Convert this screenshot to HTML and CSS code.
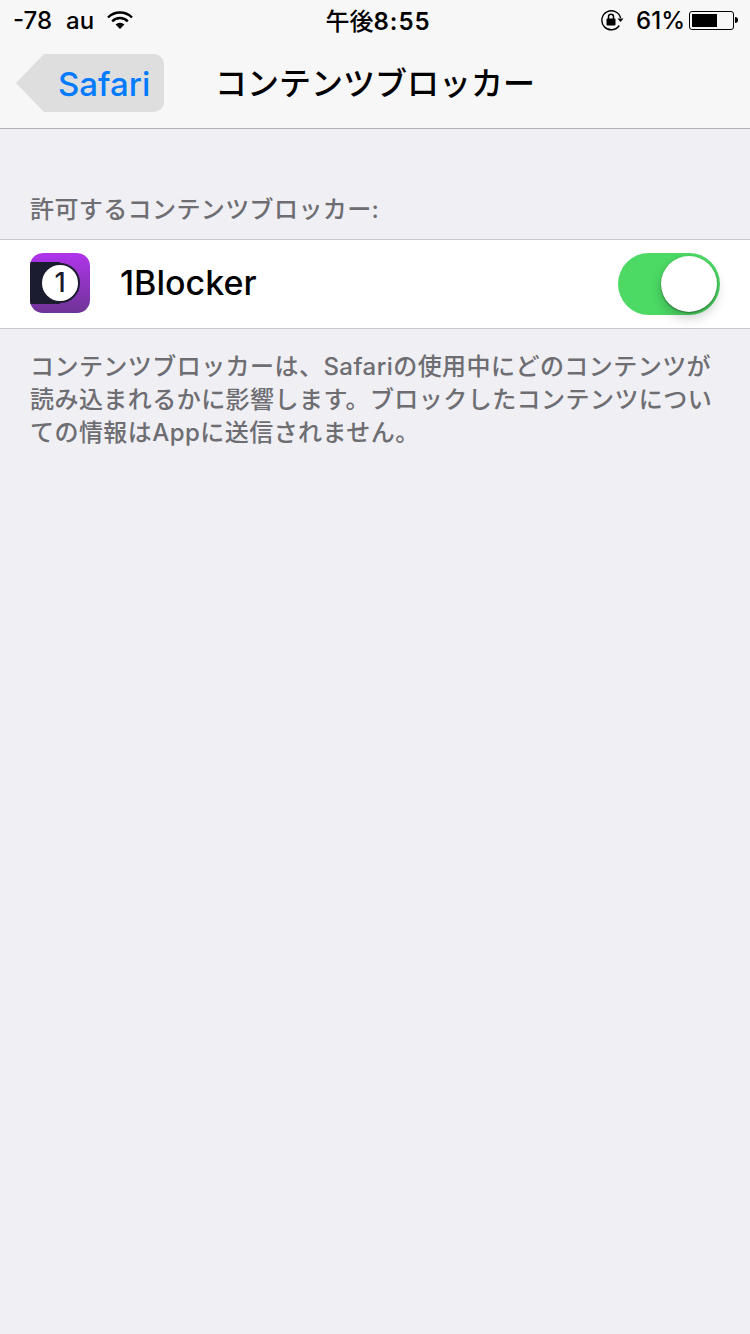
FILE: index.html
```html
<!DOCTYPE html>
<html lang="ja">
<head>
    <meta charset="UTF-8">
    <meta name="viewport" content="width=device-width, initial-scale=1.0">
    <title>コンテンツブロッカー</title>
    <link rel="stylesheet" href="styles.css">
</head>
<body>

<div class="header">
    <!-- Status bar -->
    <div class="status-bar">
        <div class="status-left">
            <span class="signal">-78</span>
            <span class="carrier">au</span>
            <svg class="wifi" width="26" height="20" viewBox="0 0 26 20">
                <path d="M1 7.5 A17 17 0 0 1 25 7.5" fill="none" stroke="#000" stroke-width="2.4"/>
                <path d="M5.2 11.3 A11 11 0 0 1 20.8 11.3" fill="none" stroke="#000" stroke-width="2.4"/>
                <path d="M13 19 L8.6 14.4 A6.4 6.4 0 0 1 17.4 14.4 Z" fill="#000"/>
            </svg>
        </div>
        <div class="status-time">午後<span class="time-digits">8:55</span></div>
        <div class="status-right">
            <svg class="rotation-lock" width="24" height="22" viewBox="0 0 24 22">
                <path d="M20.6 9 A9.5 9.5 0 1 0 19.3 16.5" fill="none" stroke="#000" stroke-width="1.4"/>
                <path d="M17.5 9.5 H23.5 L20.5 13 Z" fill="#000"/>
                <rect x="6.5" y="9.5" width="9" height="7" rx="1" fill="#000"/>
                <path d="M8.5 10 V7.8 A2.5 2.5 0 0 1 13.5 7.8 V10" fill="none" stroke="#000" stroke-width="1.5"/>
            </svg>
            <span class="battery-pct">61%</span>
            <div class="battery">
                <div class="battery-body"><div class="battery-fill" style="width: 65%"></div></div>
                <div class="battery-tip"></div>
            </div>
        </div>
    </div>

    <!-- Nav bar -->
    <div class="nav-bar">
        <a class="back" href="#">
            <svg class="back-shape" width="148" height="58" viewBox="0 0 148 58">
                <path d="M0 29 L28 0 H138 A10 10 0 0 1 148 10 V48 A10 10 0 0 1 138 58 H28 Z" fill="#dedede"/>
            </svg>
            <span class="back-label">Safari</span>
        </a>
        <h1 class="nav-title">コンテンツブロッカー</h1>
    </div>
</div>

<div class="section-title">許可するコンテンツブロッカー:</div>

<div class="row">
    <div class="row-left">
        <div class="app-icon">
            <div class="app-band"></div>
            <div class="app-dial">1</div>
        </div>
        <span class="app-name">1Blocker</span>
    </div>
    <div class="switch"><div class="knob"></div></div>
</div>

<p class="section-note">コンテンツブロッカーは、Safariの使用中にどのコンテンツが<br>読み込まれるかに影響します。ブロックしたコンテンツについ<br>ての情報はAppに送信されません。</p>

</body>
</html>
```

FILE: styles.css
```css
body {
    font-family: Inter, "Noto Sans CJK JP", sans-serif;
    margin: 0;
    height: 1334px;
    overflow: hidden;
    background-color: #efeff4;
    color: #000;
}
.header {
    height: 128px;
    background-color: #f7f7f7;
    border-bottom: 1px solid #b2b2b2;
}
.status-bar {
    display: grid;
    grid-template-columns: 1fr auto 1fr;
    align-items: center;
    height: 40px;
    padding: 0 12px 0 13px;
    font-size: 24px;
    font-weight: 500;
}
.status-left {
    display: flex;
    align-items: center;
}
.carrier {
    margin-left: 14px;
}
.wifi {
    margin-left: 13px;
}
.status-time {
    line-height: 44px;
    height: 40px;
    padding-left: 5px;
}
.time-digits {
    font-weight: 600;
    letter-spacing: 1px;
}
.status-right {
    display: flex;
    align-items: center;
    justify-content: flex-end;
}
.rotation-lock {
    margin-right: 12px;
}
.battery-pct {
    margin-right: 4px;
}
.battery {
    display: flex;
    align-items: center;
}
.battery-body {
    width: 39px;
    height: 13px;
    padding: 2px;
    border: 1px solid #000;
    border-radius: 3px;
}
.battery-fill {
    height: 100%;
    background-color: #000;
}
.battery-tip {
    width: 3px;
    height: 6px;
    margin-left: 1px;
    background-color: #000;
    border-radius: 0 3px 3px 0;
}
.nav-bar {
    position: relative;
    display: flex;
    align-items: center;
    justify-content: center;
    height: 88px;
}
.back {
    position: absolute;
    left: 16px;
    top: 14px;
    width: 148px;
    height: 58px;
    text-decoration: none;
}
.back-shape {
    position: absolute;
    left: 0;
    top: 0;
}
.back-label {
    position: absolute;
    left: 42px;
    top: 10px;
    font-size: 33px;
    font-weight: 500;
    line-height: 41px;
    color: #007aff;
}
.nav-title {
    margin: 0;
    font-size: 32px;
    font-weight: 500;
    line-height: 40px;
}
.section-title {
    margin-top: 62px;
    padding: 0 30px;
    height: 48px;
    font-size: 24px;
    font-weight: 500;
    letter-spacing: 0.4px;
    line-height: 38px;
    color: #6d6d72;
}
.row {
    display: flex;
    align-items: center;
    justify-content: space-between;
    height: 88px;
    padding: 0 30px;
    background-color: #fff;
    border-top: 1px solid #c8c7cc;
    border-bottom: 1px solid #c8c7cc;
}
.row-left {
    display: flex;
    align-items: center;
    margin-bottom: 2px;
}
.app-icon {
    position: relative;
    width: 60px;
    height: 60px;
    border-radius: 13px;
    overflow: hidden;
    background: linear-gradient(#b034ec, #6e3496);
}
.app-band {
    position: absolute;
    left: 0;
    top: 9px;
    width: 30px;
    height: 42px;
    background-color: #1b1c30;
}
.app-dial {
    position: absolute;
    left: 10px;
    top: 10px;
    width: 40px;
    height: 40px;
    box-sizing: border-box;
    border: 2px solid #1b1c30;
    border-radius: 50%;
    background-color: #fff;
    color: #1b1c30;
    font-size: 27px;
    font-weight: 500;
    line-height: 35px;
    text-align: center;
}
.app-name {
    margin-left: 30px;
    margin-bottom: 2px;
    font-size: 34px;
    font-weight: 500;
}
.switch {
    position: relative;
    width: 102px;
    height: 62px;
    border-radius: 31px;
    background-color: #4cd964;
}
.knob {
    position: absolute;
    right: 3px;
    top: 3px;
    width: 56px;
    height: 56px;
    border-radius: 50%;
    background-color: #fff;
    box-shadow: 0 6px 12px rgba(0, 0, 0, 0.2), 0 1px 2px rgba(0, 0, 0, 0.4);
}
.section-note {
    margin: 21px 0 0;
    padding: 0 30px;
    font-size: 24px;
    font-weight: 500;
    letter-spacing: 0.45px;
    line-height: 33px;
    color: #6d6d72;
    white-space: nowrap;
}
```
